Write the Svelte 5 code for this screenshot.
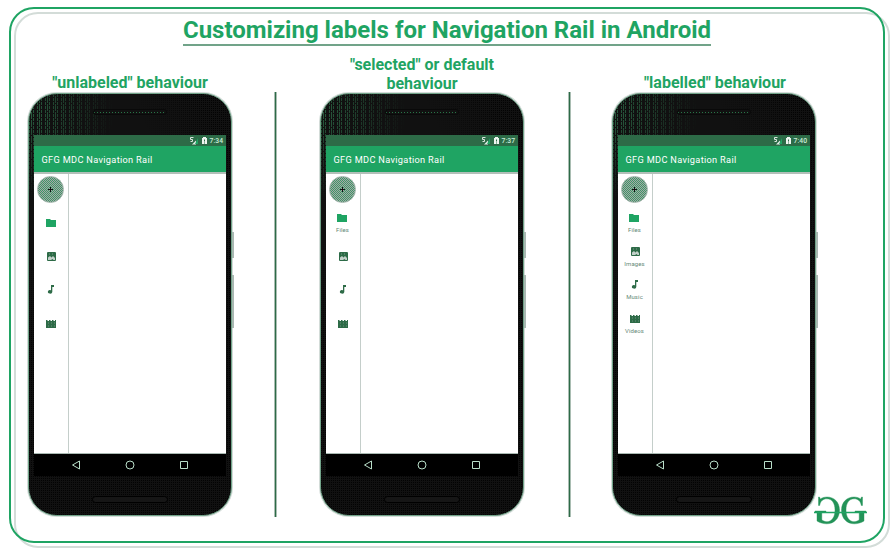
<script>
  const items = [
    { name: 'Files', icon: 'folder' },
    { name: 'Images', icon: 'image' },
    { name: 'Music', icon: 'music' },
    { name: 'Videos', icon: 'movie' }
  ];
  const phones = [
    { title: ['"unlabeled" behaviour'], time: '7:34', mode: 'none', tone: 'first' },
    { title: ['"selected" or default', 'behaviour'], time: '7:37', mode: 'selected', tone: 'second' },
    { title: ['"labelled" behaviour'], time: '7:40', mode: 'all', tone: 'third' }
  ];
  const labelled = (mode, i) => mode === 'all' || (mode === 'selected' && i === 0);
</script>

<main>
  <div class="frame back"></div>
  <div class="frame front"></div>
  <header><h1>Customizing labels for Navigation Rail in Android</h1></header>
  <div class="columns">
    {#each phones as phone, n}
      <section>
        <h2 class={phone.tone}>
          {#each phone.title as line}<span>{line}</span>{/each}
        </h2>
        <div class="row">
          <div class="phone">
            <div class="grain light"></div>
            <div class="grain dark"></div>
            <i class="key power"></i><i class="key volume"></i>
            <div class="top"><div class="speaker"></div></div>
            <div class="screen">
              <div class="status">
                <svg width="8" height="8" viewBox="0 0 8 8"><path d="M3.500 .5h-3v2h2v2h-2" fill="none" stroke="#dbe5df" /><path d="M2 7.500 6 3.500v4z" fill="#e2ece6" /><path d="M5 7 8 1v6z" fill="#1fa463" /></svg>
                <svg class="battery" width="5" height="8" viewBox="0 0 5 8"><path d="M1 0h3v1h1v6H0V1h1z" fill="#eef4f0" /><path d="M2.500 2.500v2M2.500 5.500v1" stroke="#2d6b47" /></svg>
                <span>{phone.time}</span>
              </div>
              <div class="appbar"><span>GFG MDC Navigation Rail</span></div>
              <div class="content">
                <nav>
                  <div class="fab"><svg width="7" height="7" viewBox="0 0 7 7"><path d="M3.500 1v5M1 3.500h5" stroke="#111" /></svg></div>
                  {#each items as item, i}
                    <div class="item">
                      <svg width="10" height="10" viewBox="0 0 10 10">
                        {#if item.icon === 'folder'}
                          <path d="M0 1h4l1 1h5v7H0z" fill="#1fa463" />
                        {:else if item.icon === 'image'}
                          <rect x="1" y="0" width="9" height="9" rx="1" fill="#2d6b47" />
                          <path d="M2 8V5.500L4 4l1.500 1.500L7 4l2 2v2H7.500L6.500 7 5 8z" fill="#c3d0c9" />
                          <path d="M3 2h1M6 2h1" stroke="#7d9d8c" />
                        {:else if item.icon === 'music'}
                          <path d="M5 0h3v2H6.300v5A2.200 1.800 0 1 1 5 5.200z" fill="#2d6b47" />
                        {:else}
                          <path d="M0 1h1l1 1h1V1h1l1 1h1V1h1l1 1h1V1h1v8H0z" fill="#2d6b47" />
                          <path d="M2 4h1M5 4h1M8 4h1M2 7h1M5 7h1M8 7h1" stroke="#6f937f" />
                        {/if}
                      </svg>
                      {#if labelled(phone.mode, i)}<span>{item.name}</span>{/if}
                    </div>
                  {/each}
                </nav>
              </div>
              <div class="system">
                <svg width="10" height="10" viewBox="0 0 10 10"><path d="M8.500 1v8L1.500 5z" /></svg>
                <svg width="10" height="10" viewBox="0 0 10 10"><circle cx="5" cy="5" r="4" /></svg>
                <svg width="10" height="10" viewBox="0 0 10 10"><path d="M1.500 1.500h7v7h-7z" /></svg>
              </div>
            </div>
            <div class="bottom"><div class="mic"></div></div>
          </div>
          {#if n < 2}<div class="rule"></div>{/if}
        </div>
      </section>
    {/each}
  </div>
  <svg class="logo" width="54" height="30" viewBox="0 0 54 30">
    <defs>
      <path id="gfg-g" d="M48.500 1v8.500h-1.200C46.500 5 44 2.800 40 2.800c-5 0-8 4.500-8 11.200s3 11.700 8 11.700c2.400 0 4.200-.8 5.200-2.200V16H41v-1h11v1h-2v9c-2.800 1.700-6.200 2.800-9.700 2.800-7.400 0-12.800-5.400-12.800-13.600S33 1 40 1c2.700 0 5 .8 6.700 2.100L47.500 1z" />
    </defs>
    <g fill="#239358" stroke="#239358" stroke-width=".4">
      <use href="#gfg-g" />
      <use href="#gfg-g" transform="translate(53 0) scale(-1 1)" />
    </g>
    <path d="M0 16.500h53" stroke="#1fa463" stroke-width="1.500" />
  </svg>
</main>

<style>
  :global(body) { margin: 0; background: #fff; }
  main { position: relative; width: 894px; height: 551px; overflow: hidden; background: #fff; font-family: Roboto, sans-serif; }
  main * { box-sizing: border-box; }
  .frame { position: absolute; border-style: solid; border-width: 2px; }
  .back { left: 14px; top: 12px; width: 876px; height: 536px; border-color: #d3dcd8; border-radius: 24px; }
  .front { left: 9px; top: 7px; width: 876px; height: 536px; border-color: #1fa463; border-radius: 25px; }
  header { position: relative; height: 54px; display: flex; justify-content: center; padding-top: 16px; }
  h1 { margin: 0; height: 30px; font-size: 24px; line-height: 28px; font-weight: 700; color: #1fa463; border-bottom: 2px solid #71a389; white-space: nowrap; }
  .columns { position: relative; display: grid; grid-template-columns: repeat(3, 292px); padding-left: 28px; }
  h2 { margin: 0; width: 204px; height: 39px; display: flex; flex-direction: column; justify-content: flex-end; align-items: center; padding-bottom: 1px; font-size: 16px; line-height: 19px; font-weight: 700; color: #1fa463; white-space: nowrap; }
  h2.second { padding-bottom: 0; }
  h2.third { padding-left: 2px; }
  .row { display: flex; gap: 42px; }
  .rule { width: 3px; height: 425px; margin-top: -1px; border-left: 1px solid #a9bdb2; background: #2d6b47; border-right: 1px solid #a9bdb2; }
  .second + .row { gap: 44px; }
  .phone { position: relative; width: 204px; height: 423px; background: #111; border: 1px solid #71a389; border-radius: 29px; padding: 0 5px; box-shadow: 0 0 0 1px #d3dcd8; }
  .grain { position: absolute; inset: 0; border-radius: 28px; }
  .light {
    background:
      conic-gradient(from 0deg at 1px 3px, transparent 75%, #2d6b47 0) 0 0 / 4px 4px,
      conic-gradient(from 0deg at 1px 7px, transparent 75%, #2d6b47 0) 2px 2px / 8px 8px;
    mask-image: radial-gradient(circle at 0 20px, #000 5px, transparent 85px);
    opacity: .8;
  }
  .dark { background: conic-gradient(from 0deg at 1px 1px, transparent 75%, #000 0) 0 0 / 2px 2px; mask-image: linear-gradient(155deg, transparent 25%, #000 50%), linear-gradient(65deg, transparent 75%, #000 92%); opacity: .8; }
  .key { position: absolute; left: 203px; width: 2px; background: #a9b9b2; }
  .power { top: 138px; height: 26px; }
  .volume { top: 181px; height: 53px; }
  .top { position: relative; height: 41px; padding-top: 15px; }
  .speaker { width: 74px; height: 6px; margin: 0 auto; border-radius: 3px; border: 1px solid #090909; background: #111 repeating-linear-gradient(90deg, #277546 0 1px, transparent 1px 3px) 0 2px / 100% 1px no-repeat; }
  .screen { position: relative; width: 192px; height: 341px; background: #fff; }
  .status { height: 11px; background: #2d6b47; display: flex; justify-content: flex-end; align-items: center; padding-right: 3px; }
  .status .battery { margin: 0 3px 0 4px; }
  .status span { font-size: 6.800px; line-height: 12px; padding-top: 1px; font-weight: 500; color: #c9eed9; }
  .appbar { height: 28px; padding-left: 7.500px; background: #1fa463; border-bottom: 2px solid #b3bfb9; color: #fff; font-size: 9.200px; line-height: 27px; font-weight: 400; letter-spacing: .330px; white-space: nowrap; }
  .content { height: 280px; border-bottom: 1px solid #a9b9b2; }
  nav { width: 35px; height: 100%; border-right: 1px solid #c4ceca; padding-top: 2px; display: flex; flex-direction: column; align-items: center; }
  .fab { width: 27px; height: 27px; flex: none; margin: 0 2px 3.500px 0; border-radius: 50%; border: 1px solid #a0b2a9; background: repeating-conic-gradient(#3f9668 0 25%, #a3aaa6 0 50%) 0 0 / 2px 2px; display: grid; place-items: center; }
  .item { height: 33.500px; flex: none; margin-right: 1px; display: flex; flex-direction: column; align-items: center; justify-content: center; }
  .item span { font-size: 6px; line-height: 8px; margin-top: 3px; letter-spacing: .1px; color: #678a77; }
  .item:has(span) svg { margin-top: 1px; }
  .system { height: 22px; background: #000; display: flex; justify-content: center; align-items: center; gap: 44px; }
  .system svg { fill: none; stroke: #b9dec9; stroke-width: 1; }
  .bottom { position: relative; height: 39px; padding-top: 20px; }
  .mic { width: 76px; height: 7px; margin: 0 auto; border: 1px solid #000; border-radius: 4px; background: #161616; }
  .logo { position: absolute; left: 814px; top: 496px; }
</style>
